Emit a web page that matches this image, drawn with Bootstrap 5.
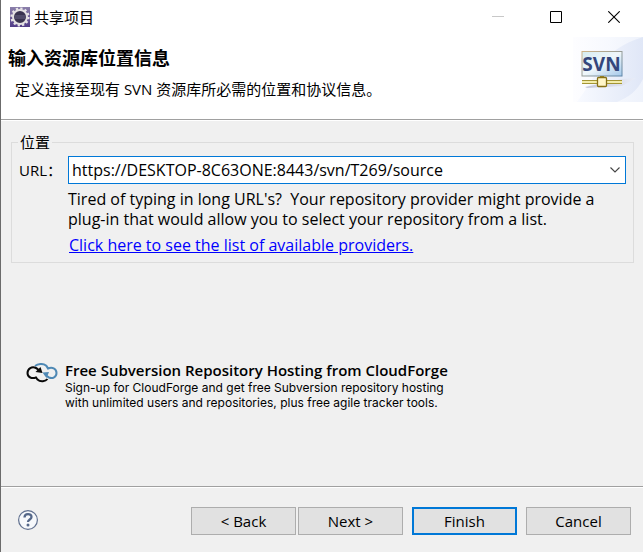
<!DOCTYPE html>
<html lang="zh-CN">
<head>
<meta charset="utf-8">
<meta name="viewport" content="width=device-width, initial-scale=1">
<title>共享项目</title>
<link href="https://cdn.jsdelivr.net/npm/bootstrap@5.3.0/dist/css/bootstrap.min.css" rel="stylesheet">
<style>
body { font: 15px/20px "Open Sans", "Noto Sans CJK SC", sans-serif; color: #000; background: #f0f0f0; }
.dialog { border-left: 1px solid #6b6b6b; }
.titlebar { height: 34px; padding-left: 9px; }
.app-name { font-size: 15px; line-height: 20px; font-weight: 400; }
.win-btn { width: 58px; height: 34px; border: 0; background: none; padding: 0; }
.banner { border-bottom: 1px solid #a0a0a0; box-shadow: 0 1px #fff; height: 86px; }
.banner-text { padding: 14px 0 0 7px; }
.banner-title { font-size: 18px; line-height: 20px; font-weight: 700; }
.banner-desc { margin-top: 11px; padding-left: 7px; }
.banner-art { width: 70px; height: 65px; margin-top: 3px; }
.content-area { padding: 12px 9px 0 10px; }
.location { border: 1px solid #dcdcdc; padding: 4px 7px 7px 7px; }
.location legend { float: none; width: auto; font-size: 15px; line-height: 20px; margin: 0 0 0 -1px; padding: 0 2px; }
.url-label { width: 49px; }
.combo { height: 28px; border: 1px solid #0078d7; background: #fff; }
.combo input { border: 0; outline: 0; background: none; padding: 0 3px; color: #000; min-width: 0; font-size: 16px; }
.combo button { border: 0; background: none; width: 20px; padding: 0; }
.hint { margin: 5px 0 0 49px; font-size: 16px; line-height: 20px; }
.hint a { color: #00f; }
.hint p + p { margin-top: 6px; padding-left: 1px; }
.promo { padding: 0 15px; margin-top: 98px; }
.promo svg { margin: 2px 7px 0 0; }
.promo h2 { font-size: 15px; line-height: 19px; font-weight: 600; }
.promo p { font-family: Inter, sans-serif; font-size: 12px; line-height: 15px; }
.actions { border-top: 1px solid #a0a0a0; box-shadow: inset 0 1px #fff; padding: 20px 12px 17px 16px; }
.help { border: 0; background: none; padding: 0; width: 22px; height: 22px; margin-top: 3px; }
.dlg-btn { width: 105px; height: 28px; padding: 0; border: 1px solid #adadad; border-radius: 0; background: #e1e1e1; color: #000; font-size: 15px; line-height: 20px; }
.dlg-default { border: 2px solid #0078d7; }
.gap-wide { margin-left: 9px; }
.gap-slim { margin-left: 2px; }
</style>
</head>
<body>
<div class="dialog d-flex flex-column min-vh-100">
  <header class="bg-white">
    <div class="titlebar d-flex align-items-center">
      <svg width="20" height="20" viewBox="0 0 20 20" aria-hidden="true">
        <defs><linearGradient id="appBg" x2="0" y2="1"><stop stop-color="#8b80aa"/><stop offset="1" stop-color="#513c87"/></linearGradient></defs>
        <rect width="20" height="20" fill="url(#appBg)"/>
        <circle cx="10" cy="10" r="8.4" fill="none" stroke="#e9e6e8" stroke-width="2.4" stroke-dasharray="2.2"/>
        <circle cx="10" cy="10" r="7" fill="#39334f" stroke="#e4e1e2" stroke-width="2"/>
        <path d="M4.5 9h11M4.5 11h11" stroke="#686482"/>
      </svg>
      <h1 class="app-name mb-0 ps-1 flex-grow-1">共享项目</h1>
      <button class="win-btn" type="button" aria-label="最小化" disabled><svg class="d-block mx-auto" width="12" height="12"><path d="M0 5.5h12" stroke="#c8c8c8"/></svg></button>
      <button class="win-btn" type="button" aria-label="最大化"><svg class="d-block mx-auto" width="12" height="12"><path d="M.5.5h11v11H.5z" fill="none" stroke="#000"/></svg></button>
      <button class="win-btn" type="button" aria-label="关闭"><svg class="d-block mx-auto" width="12" height="12"><path d="M.3.3l11.4 11.4M11.7.3L.3 11.7" stroke="#000" stroke-width="1.1"/></svg></button>
    </div>
    <div class="banner d-flex justify-content-between">
      <div class="banner-text">
        <h2 class="banner-title mb-0">输入资源库位置信息</h2>
        <p class="banner-desc mb-0">定义连接至现有 SVN 资源库所必需的位置和协议信息。</p>
      </div>
      <svg class="banner-art flex-shrink-0" viewBox="0 0 70 65" role="img" aria-label="SVN">
        <defs>
          <linearGradient id="sky" x2="1" y2="0"><stop stop-color="#fdfdff"/><stop offset=".5" stop-color="#f7f9fe"/><stop offset="1" stop-color="#eef2fb"/></linearGradient>
          <linearGradient id="wave" x2="1" y2="0"><stop stop-color="#f8faff"/><stop offset="1" stop-color="#e0e7f7"/></linearGradient>
          <linearGradient id="panel" x2="1" y2="1"><stop stop-color="#d5edf2"/><stop offset=".5" stop-color="#f0f7fa"/><stop offset="1" stop-color="#a4c8ea"/></linearGradient>
          <linearGradient id="frame" x2="1" y2="1"><stop stop-color="#d0b487"/><stop offset="1" stop-color="#5e86a9"/></linearGradient>
          <linearGradient id="shade" x2="1"><stop stop-color="#c5c7d8"/><stop offset="1" stop-color="#e9edf8"/></linearGradient>
        </defs>
        <path d="M0 0h70v65H0z" fill="url(#sky)"/>
        <path d="M70 0C50 6 36 16 26 30 20 42 12 54 4 65h40C56 60 64 54 70 42z" fill="url(#wave)"/>
        <path d="M12 50l37-8 14-1-14 8-35 2z" fill="url(#shade)"/>
        <rect x="9" y="14.500" width="40" height="24.500" fill="url(#panel)" stroke="url(#frame)"/>
        <text x="28.500" y="34" text-anchor="middle" font-family="Open Sans" font-size="19" font-weight="700" fill="#34477c">SVN</text>
        <path d="M9 43.500h40M9 46.500h40" stroke="#a49535" stroke-width="1.200"/><path d="M9 45h40" stroke="#f3edaa" stroke-width="2"/>
        <path d="M29 39v2" stroke="#9a8627" stroke-width="4"/>
        <rect x="24.500" y="40.500" width="9" height="9" rx="1" fill="#fff6c9" stroke="#877015" stroke-width="1.300"/>
      </svg>
    </div>
  </header>

  <main class="content-area flex-grow-1">
    <fieldset class="location">
      <legend>位置</legend>
      <div class="d-flex align-items-center">
        <label class="url-label flex-shrink-0" for="url">URL：</label>
        <div class="combo d-flex flex-grow-1">
          <input class="flex-grow-1" id="url" type="text" value="https://DESKTOP-8C63ONE:8443/svn/T269/source" spellcheck="false">
          <button type="button" aria-label="显示列表"><svg class="d-block mx-auto" width="10" height="6"><path d="M.5.5L5 5 9.500.5" fill="none" stroke="#444" stroke-width="1.100"/></svg></button>
        </div>
      </div>
      <div class="hint">
        <p class="mb-0">Tired of typing in long URL's?&nbsp; Your repository provider might provide a<br>plug-in that would allow you to select your repository from a list.</p>
        <p class="mb-0"><a href="#providers">Click here to see the list of available providers.</a></p>
      </div>
    </fieldset>
    <section class="promo d-flex align-items-start">
      <svg class="flex-shrink-0" width="32" height="20" viewBox="0 0 32 20" fill="none" aria-hidden="true">
        <path d="M9 3C12 .5 17 .3 20 2.500c1 1 1.500 2 2 3 4-2 8.500 0 8.500 4.500 0 4-4 6-7.500 4.500-2-1-3-2-4-3.500" stroke="#4f89b5" stroke-width="2"/>
        <path d="M16.500 9.500l6.500-.5-2.500 6z" fill="#4f89b5"/>
        <path d="M21.500 16c-2 2.500-7 3.500-10 .5l-1.500-2c-4 1.500-8.500 0-8.500-4.500s4.500-7 8.500-5c1.500.8 2.500 2 3.500 3" stroke="#080808" stroke-width="2"/>
        <path d="M16.500 10l-7-1 5-5z" fill="#080808"/>
      </svg>
      <div>
        <h2 class="mb-0">Free Subversion Repository Hosting from CloudForge</h2>
        <p class="mb-0">Sign-up for CloudForge and get free Subversion repository hosting<br>with unlimited users and repositories, plus free agile tracker tools.</p>
      </div>
    </section>
  </main>

  <footer class="actions d-flex align-items-start">
    <button class="help me-auto" type="button" aria-label="帮助"><svg class="d-block" width="22" height="22" viewBox="0 0 22 22" fill="none"><circle cx="11" cy="10" r="9.400" fill="#f6f8fb" stroke="#60708f" stroke-width="1.200"/><path d="M7.500 7.500C7.500 3 14.500 3 14.500 7c0 2.500-3.500 2.500-3.500 5" stroke="#546789" stroke-width="2.300"/><circle cx="11" cy="15" r="1.500" fill="#546789"/></svg></button>
    <button class="btn dlg-btn" type="button">&lt; Back</button>
    <button class="btn dlg-btn gap-slim" type="button">Next &gt;</button>
    <button class="btn dlg-btn dlg-default gap-wide" type="submit">Finish</button>
    <button class="btn dlg-btn gap-wide" type="button">Cancel</button>
  </footer>
</div>
<script src="https://cdn.jsdelivr.net/npm/bootstrap@5.3.0/dist/js/bootstrap.bundle.min.js"></script>
</body>
</html>
